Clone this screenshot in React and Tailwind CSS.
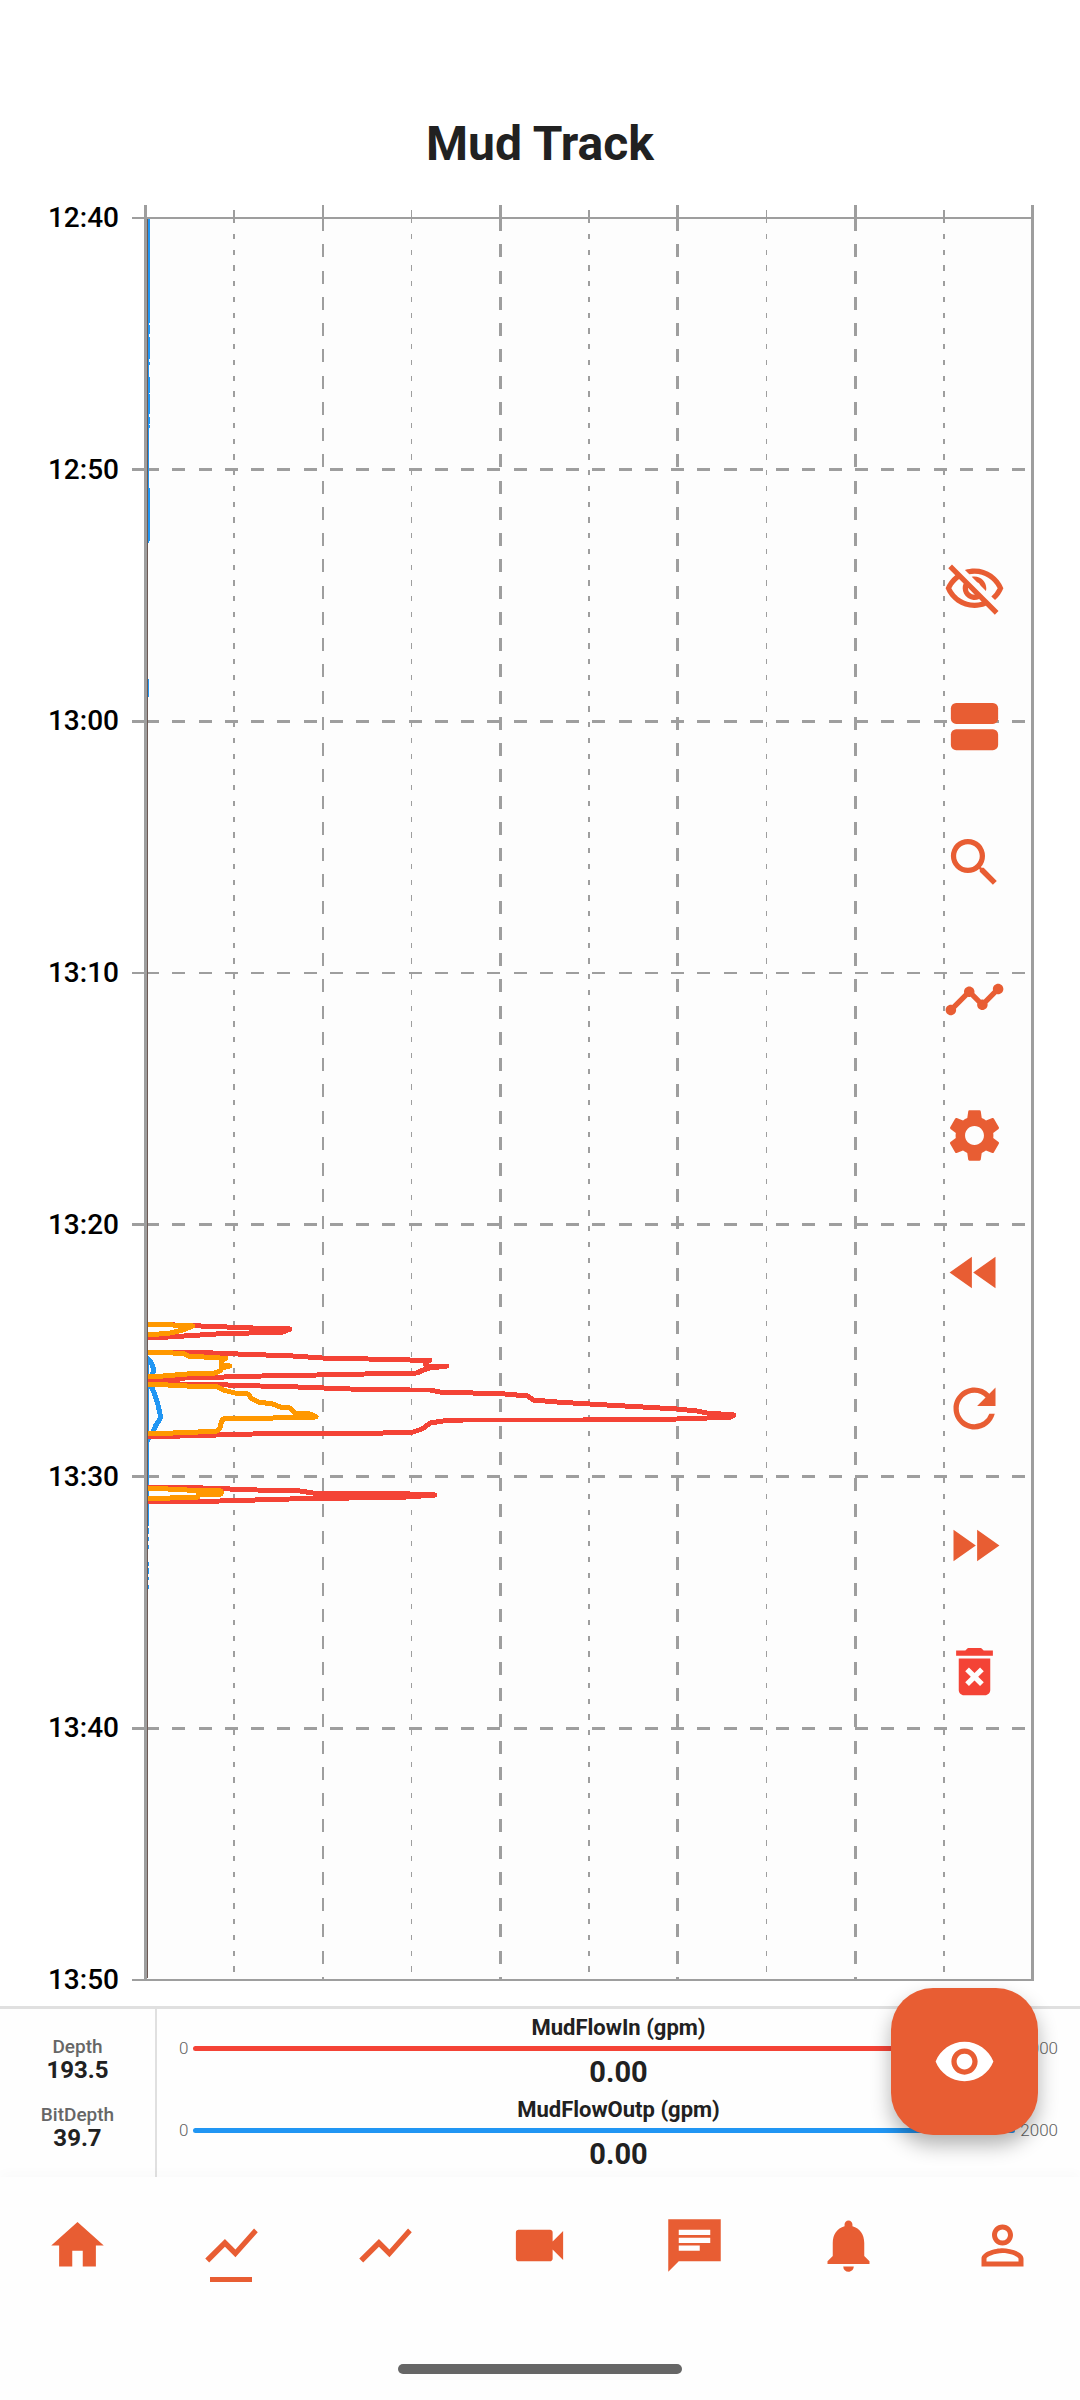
import {
  MdFastForward,
  MdFastRewind,
  MdDeleteForever,
  MdHome,
  MdNotifications,
  MdOutlineVisibilityOff,
  MdPersonOutline,
  MdRefresh,
  MdSearch,
  MdSettings,
  MdShowChart,
  MdTimeline,
  MdVideocam,
  MdVisibility,
} from 'react-icons/md';

const GRID = '#9e9e9e';

const times = ['12:40', '12:50', '13:00', '13:10', '13:20', '13:30', '13:40', '13:50'];

const majorX = [
  { x: 177, w: 2 },
  { x: 354.5, w: 3 },
  { x: 531.5, w: 3 },
  { x: 709.5, w: 3 },
];

const minorX = [
  { x: 88, w: 2 },
  { x: 265.5, w: 1 },
  { x: 443, w: 2 },
  { x: 620.5, w: 1 },
  { x: 798, w: 2 },
];

const gridY = [
  { y: 251.5, w: 3 },
  { y: 503.5, w: 3 },
  { y: 755, w: 2 },
  { y: 1006.5, w: 3 },
  { y: 1258.5, w: 3 },
  { y: 1510.5, w: 3 },
];

const flowIn = [
  '2,1106 55,1108 107,1110 144,1111 137,1114 70,1116 22,1119 2,1120',
  '2,1134 42,1134 92,1136 147,1138 176,1140 222,1141 264,1142 284,1142 279,1145 280,1148 301,1148 284,1150 277,1152 271,1155 219,1156 171,1157 116,1158 40,1160 2,1161',
  '2,1162 34,1166 82,1167 114,1168 152,1169 204,1171 264,1172 284,1172 294,1174 327,1175 359,1176 382,1178 387,1182 411,1184 427,1185 461,1187 497,1189 531,1191 551,1193 561,1195 588,1197 585,1199 561,1200 531,1201 437,1202 317,1202 297,1203 284,1205 279,1209 276,1211 267,1214 237,1215 174,1215 107,1216 34,1218 2,1219',
  '2,1269 57,1270 111,1272 154,1273 167,1275 207,1275 264,1276 289,1277 261,1279 204,1280 144,1281 74,1283 2,1284',
];

const pressure = [
  '2,1106 27,1107 47,1108 37,1112 24,1115 2,1117',
  '2,1134 27,1135 39,1136 42,1138 74,1140 80,1140 75,1143 75,1147 84,1148 76,1150 74,1153 69,1155 41,1156 17,1158 2,1159',
  '2,1166 41,1168 72,1169 77,1172 89,1175 102,1176 105,1180 112,1184 127,1186 134,1189 144,1190 149,1195 164,1196 170,1199 127,1200 104,1200 77,1201 75,1205 74,1210 71,1213 52,1214 2,1216',
  '2,1270 41,1272 75,1273 75,1276 52,1277 52,1279 24,1280 2,1281',
];

const flowOut = '1,1140 5,1144 7,1149 7,1155 4,1159 2,1164 6,1170 9,1177 12,1187 14,1196 14,1201 10,1207 8,1212 3,1219 1,1224';

// near-zero readings: one pixel beside the axis, two where the value rises a little
const flowOutThin = [
  [1, 325], [461, 479], [1140, 1308], [1310, 1316], [1319, 1323], [1327, 1331],
  [1344, 1348], [1350, 1356], [1359, 1362], [1367, 1371],
];
const flowOutWide = [
  [1, 105], [107, 116], [119, 141], [144, 147], [159, 175], [176, 196], [199, 206], [207, 210], [270, 323],
];

const tools = [
  { label: 'Hide values', icon: MdOutlineVisibilityOff },
  { label: 'Split view', icon: SplitIcon },
  { label: 'Search', icon: MdSearch },
  { label: 'Curves', icon: MdTimeline },
  { label: 'Settings', icon: MdSettings },
  { label: 'Back in time', icon: MdFastRewind },
  { label: 'Refresh', icon: MdRefresh },
  { label: 'Forward in time', icon: MdFastForward },
];

const depths = [
  { label: 'Depth', value: '193.5' },
  { label: 'BitDepth', value: '39.7' },
];

const tracks = [
  { label: 'MudFlowIn (gpm)', value: '0.00', min: 0, max: 2000, color: 'bg-[#f44336]' },
  { label: 'MudFlowOutp (gpm)', value: '0.00', min: 0, max: 2000, color: 'bg-[#2196f3]' },
];

const navItems = [
  { label: 'Home', icon: MdHome },
  { label: 'Mud track', icon: MdShowChart, active: true },
  { label: 'Drilling track', icon: MdShowChart },
  { label: 'Video', icon: MdVideocam },
  { label: 'Chat', icon: ChatIcon },
  { label: 'Alerts', icon: MdNotifications },
  { label: 'Profile', icon: MdPersonOutline },
];

function SplitIcon({ className }) {
  return (
    <svg viewBox="0 0 24 24" fill="currentColor" className={className}>
      <rect x="3" y="3" width="18" height="8" rx="2" />
      <rect x="3" y="13" width="18" height="8" rx="2" />
    </svg>
  );
}

function ChatIcon({ className }) {
  return (
    <svg viewBox="0 0 24 24" fill="currentColor" className={className}>
      <path d="M22 2H2v20l4-4h16V2zM6 9h12v2H6V9zm8 5H6v-2h8v2zm4-6H6V6h12v2z" />
    </svg>
  );
}

function TrackChart() {
  return (
    <svg viewBox="-14 -14 902 1790" className="block min-w-0 flex-1" role="img" aria-label="Mud flow over time">
      <rect x="0" y="0" width="886" height="1762" fill="#fdfdfd" />
      <g stroke={GRID} fill="none" shapeRendering="crispEdges">
        {minorX.map(({ x, w }) => (
          <g key={x} strokeWidth={w}>
            <line x1={x} x2={x} y1="-8" y2="0" />
            <line x1={x} x2={x} y1="0" y2="1762" strokeDasharray="5.25 10.5" />
          </g>
        ))}
        {majorX.map(({ x, w }) => (
          <g key={x} strokeWidth={w}>
            <line x1={x} x2={x} y1="-13" y2="0" />
            <line x1={x} x2={x} y1="0" y2="1762" strokeDasharray="13.125 13.125" />
          </g>
        ))}
        {gridY.map(({ y, w }) => (
          <g key={y} strokeWidth={w}>
            <line x1="-14" x2="0" y1={y} y2={y} />
            <line x1="0" x2="886" y1={y} y2={y} strokeDasharray="13.125 13.125" />
          </g>
        ))}
      </g>

      <g fill="#2196f3" shapeRendering="crispEdges">
        {flowOutThin.map(([from, to]) => (
          <rect key={from} x="2" y={from} width="1" height={to - from} />
        ))}
        {flowOutWide.map(([from, to]) => (
          <rect key={from} x="2" y={from} width="2" height={to - from} />
        ))}
      </g>
      <g fill="none" strokeWidth="5" strokeLinejoin="round" strokeLinecap="butt" shapeRendering="crispEdges">
        <polyline points={flowOut} stroke="#2196f3" />
        {flowIn.map((points) => (
          <polyline key={points} points={points} stroke="#f44336" />
        ))}
        {pressure.map((points) => (
          <polyline key={points} points={points} stroke="#ff9800" />
        ))}
      </g>

      <g stroke={GRID} strokeWidth="2" fill="none" shapeRendering="crispEdges">
        <line x1="-14" x2="886" y1="0" y2="0" />
        <line x1="-14" x2="888" y1="1762" y2="1762" />
        <line x1="1.5" x2="1.5" y1="1" y2="1760" stroke="#6d5a55" strokeWidth="1" />
        <line x1="-0.5" x2="-0.5" y1="-13" y2="1762" strokeWidth="3" />
        <line x1="886.5" x2="886.5" y1="-13" y2="1763" strokeWidth="3" />
      </g>
    </svg>
  );
}

export default function App() {
  return (
    <div className="min-h-screen bg-white font-['Roboto',sans-serif] text-[#212121]">
      <header className="pt-[116px] pb-[32px]">
        <h1 className="text-center text-[48px] leading-[56px] font-bold">Mud Track</h1>
      </header>

      <main>
        <section className="relative flex pr-[46px]">
          <div className="flex w-[132px] shrink-0 flex-col justify-between pr-[13px] text-right text-[28px] leading-[28px] font-medium text-black">
            {times.map((t) => (
              <span key={t}>{t}</span>
            ))}
          </div>
          <TrackChart />

          {/* Tools float over the right edge of the plot */}
          <div className="absolute top-[354px] right-[74px] flex flex-col gap-[63px] text-[#e85d33]">
            <div className="flex h-[1019px] flex-col justify-between">
              {tools.map(({ label, icon: Icon }) => (
                <button key={label} type="button" aria-label={label} className="cursor-pointer">
                  <Icon className="size-[63px]" />
                </button>
              ))}
            </div>
            <button type="button" aria-label="Delete" className="cursor-pointer text-[#f44336]">
              <MdDeleteForever className="size-[63px]" />
            </button>
          </div>
        </section>

        <section className="relative mt-3 flex border-t-[3px] border-[#e0e0e0] bg-[#fefefe]">
          <div className="flex w-[157px] shrink-0 flex-col justify-center gap-[22px] border-r-2 border-[#e0e0e0] pt-[2px] text-center">
            {depths.map((d) => (
              <div key={d.label}>
                <div className="text-[19px] leading-[20px] font-medium text-[#666666]">{d.label}</div>
                <div className="text-[24px] leading-[26px] font-bold">{d.value}</div>
              </div>
            ))}
          </div>

          <div className="flex flex-1 flex-col gap-[11px] px-[22px] pt-[7px] pb-2 text-center">
            {tracks.map((t) => (
              <div key={t.label}>
                <div className="text-[22px] leading-[24px] font-bold">{t.label}</div>
                <div className="flex items-center gap-[5px] text-[17px] leading-[17px] font-light text-[#616161]">
                  <span>{t.min}</span>
                  <span className={`h-[5px] flex-1 rounded-full ${t.color}`} />
                  <span>{t.max}</span>
                </div>
                <div className="text-[29px] leading-[30px] font-bold">{t.value}</div>
              </div>
            ))}
          </div>

          <button
            type="button"
            aria-label="Show values"
            className="absolute -top-[21px] right-[42px] z-10 flex size-[147px] cursor-pointer items-center justify-center rounded-[42px] bg-[#e85d33] text-white shadow-[0_10px_20px_rgba(0,0,0,0.3)]"
          >
            <MdVisibility className="size-[63px]" />
          </button>
        </section>
      </main>

      <footer className="relative flex flex-col items-center gap-[82px] bg-[#fefefe] pt-[37px] pb-[26px] shadow-[0_-4px_12px_rgba(0,0,0,0.02)]">
        <nav className="flex w-full text-[#e85d33]">
          {navItems.map(({ label, icon: Icon, active }) => (
            <a key={label} href="#" aria-label={label} className="flex flex-1 flex-col items-center">
              <Icon className="size-[63px]" />
              <span className={`h-[5px] w-[42px] ${active ? 'bg-[#e85d33]' : ''}`} />
            </a>
          ))}
        </nav>
        <div className="h-[10px] w-[284px] rounded-full bg-[#666666]" />
      </footer>
    </div>
  );
}
